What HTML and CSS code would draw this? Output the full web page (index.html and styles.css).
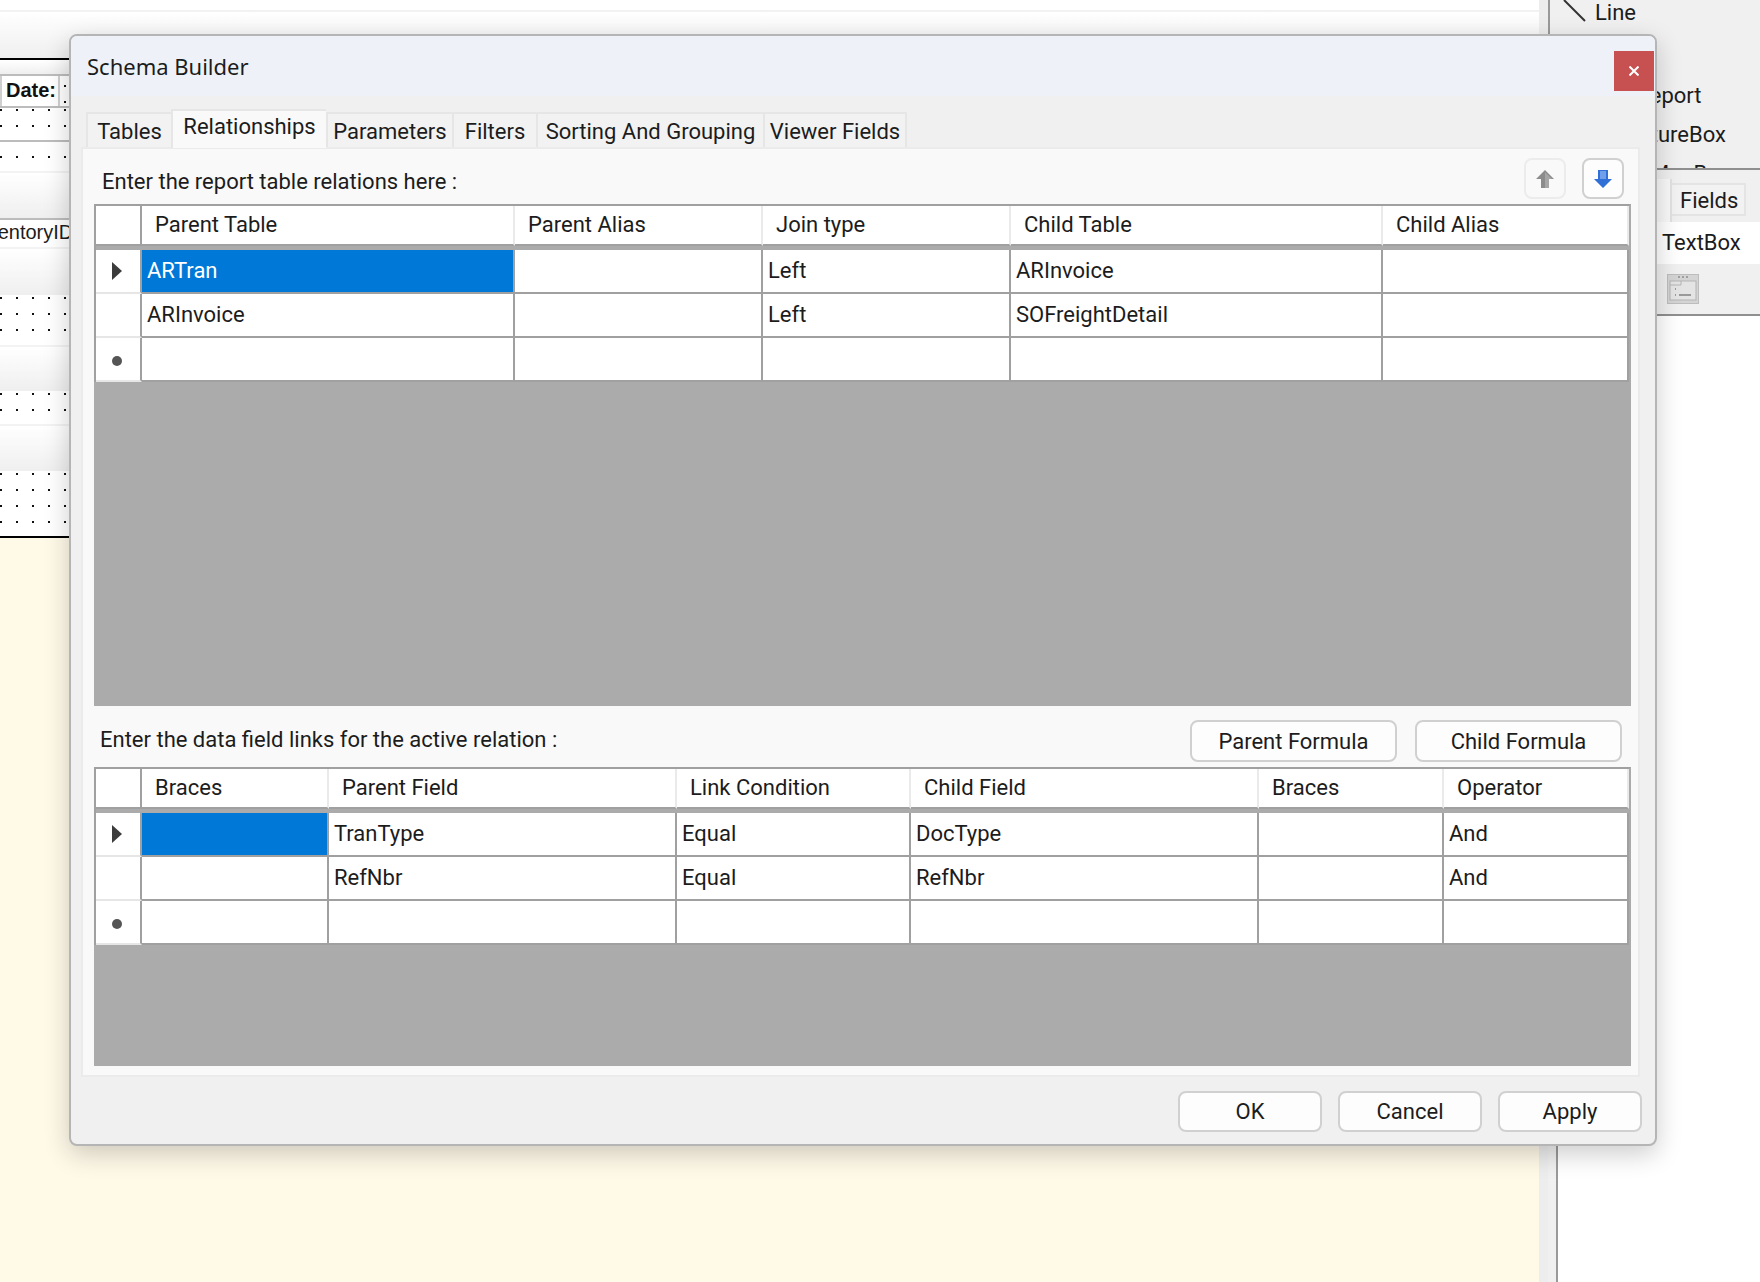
FILE: index.html
```html
<!DOCTYPE html>
<html lang="en">
<head>
    <meta charset="UTF-8">
    <title>Schema Builder</title>
    <link rel="stylesheet" href="styles.css">
</head>
<body>
    <!-- Report design surface -->
    <div class="designer">
        <div class="top-strip"></div>
        <div class="band band-head"></div>
        <div class="rule-black"></div>
        <div class="band band-sub"></div>
        <div class="date-row"><div class="date-box">Date:</div></div>
        <div class="dots dots-a"></div>
        <div class="dots dots-b"></div>
        <div class="band band-group"></div>
        <div class="field-row"><span class="field-name">InventoryID</span></div>
        <div class="band band-detail"></div>
        <div class="dots dots-c"></div>
        <div class="band band-foot"></div>
        <div class="dots dots-d"></div>
        <div class="band band-end"></div>
        <div class="dots dots-e"></div>
        <div class="rule-black"></div>
        <div class="paper"></div>
    </div>

    <div class="gutter"></div>

    <!-- Toolbox and fields on the right -->
    <div class="side">
        <div class="toolbox">
            <div class="tool tool-line">
                <svg class="line-icon" width="24" height="22" viewBox="0 0 24 22"><path d="M1 0 L22 21" stroke="#333" stroke-width="2"/></svg>
                <span>Line</span>
            </div>
            <div class="tool tool-report">Subreport</div>
            <div class="tool tool-picture">PictureBox</div>
            <div class="tool tool-map">MapBox</div>
        </div>
        <div class="props">
            <div class="props-tabs">
                <div class="props-tab-active"></div>
                <div class="props-tab">Fields</div>
            </div>
            <div class="props-row">TextBox</div>
            <div class="props-bar">
                <svg width="32" height="30" viewBox="0 0 32 30">
                    <rect x="0.5" y="0.5" width="31" height="29" fill="#d4d4d4" stroke="#bdbdbd"/>
                    <rect x="3" y="7" width="26" height="19" fill="#e4e4e4" stroke="#b4b4b4"/>
                    <path d="M3 11 H14 V7" fill="none" stroke="#b4b4b4"/>
                    <path d="M11 3 H13 M15 3 H17 M19 3 H21" stroke="#a0a0a0" stroke-width="2"/>
                    <path d="M8 15 H9 M8 21 H9 M12 21 H24" stroke="#9a9a9a" stroke-width="2"/>
                </svg>
            </div>
            <div class="props-body"></div>
        </div>
    </div>

    <!-- Dialog -->
    <div class="dialog">
        <div class="dialog-title">
            <span>Schema Builder</span>
            <button class="close-btn">
                <svg width="10" height="10" viewBox="0 0 10 10"><path d="M0.5 0.5 L9.5 9.5 M9.5 0.5 L0.5 9.5" stroke="#fff" stroke-width="2"/></svg>
            </button>
        </div>

        <div class="tabs">
            <div class="tab tab-tables">Tables</div>
            <div class="tab tab-active">Relationships</div>
            <div class="tab tab-params">Parameters</div>
            <div class="tab tab-filters">Filters</div>
            <div class="tab tab-sorting">Sorting And Grouping</div>
            <div class="tab tab-viewer">Viewer Fields</div>
        </div>

        <div class="panel">
            <div class="panel-head">
                <span class="panel-label">Enter the report table relations here :</span>
                <div class="arrow-btns">
                    <button class="arrow-btn arrow-off">
                        <svg width="18" height="18" viewBox="0 0 18 18"><path d="M9 0 L18 9 H13 V18 H5 V9 H0 Z" fill="#8c8c8c"/><path d="M9 2 L9 18 H13 V9 H16 Z" fill="#a6a6a6"/></svg>
                    </button>
                    <button class="arrow-btn">
                        <svg width="18" height="18" viewBox="0 0 18 18"><path d="M4 0 H14 V9 H18 L9 18 L0 9 H4 Z" fill="#2f6fd6"/><path d="M6 1 H12 V9 H6 Z" fill="#6f9eea"/></svg>
                    </button>
                </div>
            </div>

            <div class="grid-box grid-top">
                <div class="grid cols-relations">
                    <div class="head corner"></div>
                    <div class="head">Parent Table</div>
                    <div class="head">Parent Alias</div>
                    <div class="head">Join type</div>
                    <div class="head">Child Table</div>
                    <div class="head">Child Alias</div>

                    <div class="mark"><i class="mark-arrow"></i></div>
                    <div class="cell selected">ARTran</div>
                    <div class="cell"></div>
                    <div class="cell">Left</div>
                    <div class="cell">ARInvoice</div>
                    <div class="cell"></div>

                    <div class="mark"></div>
                    <div class="cell">ARInvoice</div>
                    <div class="cell"></div>
                    <div class="cell">Left</div>
                    <div class="cell">SOFreightDetail</div>
                    <div class="cell"></div>

                    <div class="mark"><i class="mark-dot"></i></div>
                    <div class="cell"></div>
                    <div class="cell"></div>
                    <div class="cell"></div>
                    <div class="cell"></div>
                    <div class="cell"></div>
                </div>
            </div>

            <div class="panel-mid">
                <span class="panel-label">Enter the data field links for the active relation :</span>
                <div class="formula-btns">
                    <button class="btn btn-formula">Parent Formula</button>
                    <button class="btn btn-formula">Child Formula</button>
                </div>
            </div>

            <div class="grid-box grid-bottom">
                <div class="grid cols-links">
                    <div class="head corner"></div>
                    <div class="head">Braces</div>
                    <div class="head">Parent Field</div>
                    <div class="head">Link Condition</div>
                    <div class="head">Child Field</div>
                    <div class="head">Braces</div>
                    <div class="head">Operator</div>

                    <div class="mark"><i class="mark-arrow"></i></div>
                    <div class="cell selected"></div>
                    <div class="cell">TranType</div>
                    <div class="cell">Equal</div>
                    <div class="cell">DocType</div>
                    <div class="cell"></div>
                    <div class="cell">And</div>

                    <div class="mark"></div>
                    <div class="cell"></div>
                    <div class="cell">RefNbr</div>
                    <div class="cell">Equal</div>
                    <div class="cell">RefNbr</div>
                    <div class="cell"></div>
                    <div class="cell">And</div>

                    <div class="mark"><i class="mark-dot"></i></div>
                    <div class="cell"></div>
                    <div class="cell"></div>
                    <div class="cell"></div>
                    <div class="cell"></div>
                    <div class="cell"></div>
                    <div class="cell"></div>
                </div>
            </div>
        </div>

        <div class="dialog-foot">
            <button class="btn btn-foot">OK</button>
            <button class="btn btn-foot">Cancel</button>
            <button class="btn btn-foot">Apply</button>
        </div>
    </div>
</body>
</html>
```

FILE: styles.css
```css
/* Base */
body {
    margin: 0;
    width: 1760px;
    height: 1282px;
    overflow: hidden;
    display: flex;
    background-color: #fff;
    color: #1c1c1c;
    font-family: Roboto, "Liberation Sans", sans-serif;
    font-size: 22px;
}

button {
    font: inherit;
    color: inherit;
    padding: 0;
    cursor: pointer;
}

/* Design surface */
.designer {
    width: 1539px;
    height: 1282px;
    flex-shrink: 0;
    display: flex;
    flex-direction: column;
    font-family: "Liberation Sans", sans-serif;
    font-size: 20px;
    overflow: hidden;
}

.top-strip {
    height: 10px;
    background-color: #fff;
    border-bottom: 2px solid #f2f2f2;
}

.band {
    background: linear-gradient(#fff, #efefef);
    border-top: 2px solid #f3f3f3;
    box-sizing: border-box;
}

.band-head { height: 46px; border-top: none; }
.band-sub { height: 14px; border-top: none; }
.band-group { height: 47px; }
.band-detail { height: 48px; }
.band-foot { height: 46px; }
.band-end { height: 47px; }

.rule-black {
    height: 2px;
    background-color: #000;
}

.date-row {
    height: 30px;
    border-top: 2px solid #bcbcbc;
    border-bottom: 2px solid #bcbcbc;
    background-color: #fff;
    background-image: conic-gradient(at 2px 2px, transparent 75%, #111 0);
    background-size: 16px 16px;
    background-position: 0 9px;
}

.date-box {
    width: 60px;
    height: 30px;
    box-sizing: border-box;
    padding-left: 4px;
    border-left: 2px solid #cfcfcf;
    border-right: 2px solid #cfcfcf;
    background-color: #fff;
    font-weight: bold;
    line-height: 28px;
    color: #111;
}

.dots {
    background-color: #fff;
    background-image: conic-gradient(at 2px 2px, transparent 75%, #111 0);
    background-size: 16px 16px;
}

.dots-a { height: 32px; background-position: 0 1px; border-bottom: 2px solid #bcbcbc; }
.dots-b { height: 29px; background-position: 0 14px; }
.dots-c { height: 50px; background-position: 0 2px; }
.dots-d { height: 33px; background-position: 0 2px; }
.dots-e { height: 65px; background-position: 0 2px; }

.field-row {
    height: 27px;
    border-top: 2px solid #bcbcbc;
    background-color: #fff;
    line-height: 24px;
    overflow: hidden;
    white-space: nowrap;
}

.field-name {
    display: inline-block;
    margin-left: -29px;
}

.paper {
    flex-grow: 1;
    background-color: #fffae8;
}

.gutter {
    width: 9px;
    flex-shrink: 0;
    background-color: #ededed;
}

/* Right side */
.side {
    flex-grow: 1;
    display: flex;
    flex-direction: column;
    min-width: 0;
}

.toolbox {
    height: 168px;
    background-color: #f0f0f0;
    border-left: 2px solid #999;
    overflow: hidden;
    flex-shrink: 0;
    font-size: 22px;
    line-height: 28px;
}

.tool { white-space: nowrap; }

.tool-line {
    height: 82px;
    padding-left: 13px;
    display: flex;
    align-items: flex-start;
    gap: 8px;
}

.line-icon { margin-top: 0; flex-shrink: 0; }
.tool-line span { margin-top: -1px; }

.tool-report { height: 39px; padding-left: 55px; }
.tool-picture { height: 39px; padding-left: 70px; }
.tool-map { padding-left: 100px; }

.props {
    flex-grow: 1;
    display: flex;
    flex-direction: column;
    border-top: 2px solid #8f8f8f;
    background-color: #f0f0f0;
}

.props-tabs {
    height: 52px;
    display: flex;
    align-items: flex-start;
}

.props-tab-active {
    width: 122px;
    height: 43px;
    margin-top: 9px;
    background-color: #f9f9f9;
    border-right: 2px solid #e2e2e2;
    flex-shrink: 0;
}

.props-tab {
    width: 74px;
    height: 33px;
    margin-top: 13px;
    padding-left: 8px;
    box-sizing: border-box;
    border: 2px solid #e4e4e4;
    border-left: none;
    background-color: #f2f2f2;
    line-height: 32px;
}

.props-row {
    height: 42px;
    padding-left: 114px;
    line-height: 42px;
    background-color: #fff;
}

.props-bar {
    height: 52px;
    padding: 10px 0 0 119px;
    box-sizing: border-box;
    border-bottom: 2px solid #8f8f8f;
    background-color: #f0f0f0;
}

.props-body {
    flex-grow: 1;
    margin-left: 8px;
    background-color: #fff;
    border-left: 2px solid #999;
}

/* Dialog */
.dialog {
    position: absolute;
    left: 69px;
    top: 34px;
    width: 1588px;
    height: 1112px;
    box-sizing: border-box;
    display: flex;
    flex-direction: column;
    background-color: #f0f0f0;
    border: 2px solid #b5b5b5;
    border-radius: 8px;
    box-shadow: 0 8px 26px rgba(0, 0, 0, 0.2);
}

.dialog-title {
    height: 60px;
    flex-shrink: 0;
    position: relative;
    padding-left: 16px;
    box-sizing: border-box;
    background-color: #eef2f8;
    border-radius: 6px 6px 0 0;
    font-family: "Noto Sans", sans-serif;
    font-size: 22px;
    line-height: 60px;
}

.close-btn {
    position: absolute;
    right: 1px;
    top: 15px;
    width: 40px;
    height: 40px;
    border: none;
    background-color: #c75050;
    display: flex;
    align-items: center;
    justify-content: center;
}

/* Tabs */
.tabs {
    height: 51px;
    flex-shrink: 0;
    display: flex;
    align-items: flex-end;
    padding-left: 15px;
}

.tab {
    height: 35px;
    box-sizing: border-box;
    border: 2px solid #e6e6e6;
    border-bottom: none;
    border-right: none;
    background-color: #f2f2f2;
    text-align: center;
    line-height: 35px;
    white-space: nowrap;
}

.tab-tables { width: 85px; }
.tab-active {
    width: 155px;
    height: 39px;
    background-color: #f9f9f9;
    line-height: 31px;
    position: relative;
    top: 1px;
}
.tab-params { width: 126px; }
.tab-filters { width: 84px; }
.tab-sorting { width: 227px; }
.tab-viewer { width: 144px; border-right: 2px solid #e6e6e6; }

.panel {
    height: 930px;
    margin: 0 15px 0 10px;
    flex-shrink: 0;
    box-sizing: border-box;
    padding: 0 7px 9px 11px;
    display: flex;
    flex-direction: column;
    background-color: #f9f9f9;
    border: 2px solid #ebebeb;
}

.panel-head {
    height: 55px;
    flex-shrink: 0;
    display: flex;
    justify-content: space-between;
    padding-left: 8px;
    padding-right: 7px;
}

.panel-label {
    line-height: 1;
    white-space: nowrap;
}

.panel-head .panel-label { margin-top: 22px; }
.panel-mid .panel-label { margin-top: 23px; }

.arrow-btns {
    display: flex;
    gap: 16px;
    padding-top: 9px;
}

.arrow-btn {
    width: 42px;
    height: 41px;
    display: flex;
    align-items: center;
    justify-content: center;
    border: 2px solid #d0d0d0;
    border-radius: 8px;
    background-color: #fdfdfd;
}

.arrow-off {
    border-color: #ececec;
    background-color: #f9f9f9;
}

.panel-mid {
    height: 61px;
    flex-shrink: 0;
    display: flex;
    justify-content: space-between;
    padding: 0 9px 0 6px;
}

.formula-btns {
    display: flex;
    gap: 18px;
    padding-top: 14px;
}

.btn {
    box-sizing: border-box;
    border: 2px solid #d0d0d0;
    border-radius: 8px;
    background-color: #fdfdfd;
}

.btn-formula {
    width: 207px;
    height: 42px;
}

/* Grids */
.grid-box {
    flex-shrink: 0;
    background-color: #ababab;
    overflow: hidden;
}

.grid-top { height: 502px; }
.grid-bottom { height: 299px; }

.grid {
    display: grid;
    grid-auto-rows: 44px;
    border-top: 2px solid #a0a0a0;
    border-left: 2px solid #a0a0a0;
    border-right: 2px solid #ababab;
}

.cols-relations {
    grid-template-columns: 46px 373px 248px 248px 372px 1fr;
}

.cols-links {
    grid-template-columns: 46px 187px 348px 234px 348px 185px 1fr;
}

.head {
    height: 40px;
    box-sizing: border-box;
    padding-left: 13px;
    background-color: #fff;
    border-right: 2px solid #eaeaea;
    border-bottom: 2px solid #a0a0a0;
    line-height: 37px;
    white-space: nowrap;
}

.head.corner {
    border-right-color: #a0a0a0;
    padding: 0;
}

.grid .head:nth-child(-n+7) { grid-row: 1; }

.mark {
    background-color: #fff;
    border-right: 2px solid #a0a0a0;
    border-bottom: 2px solid #e6e6e6;
    display: flex;
    align-items: center;
    justify-content: center;
    box-sizing: border-box;
}

.mark-arrow {
    display: block;
    width: 0;
    height: 0;
    margin-right: 2px;
    border-left: 10px solid #3c3c3c;
    border-top: 9px solid transparent;
    border-bottom: 9px solid transparent;
}

.mark-dot {
    display: block;
    width: 10px;
    height: 10px;
    margin: 3px 3px 0 0;
    border-radius: 50%;
    background-color: #555;
}

.cell {
    box-sizing: border-box;
    padding-left: 5px;
    background-color: #fff;
    border-right: 2px solid #a0a0a0;
    border-bottom: 2px solid #a0a0a0;
    line-height: 41px;
    white-space: nowrap;
}

.cell:last-child,
.cell.selected { border-right-color: #a0a0a0; }

.selected {
    background-color: #0078d7;
    color: #fff;
}

/* Footer */
.dialog-foot {
    flex-grow: 1;
    display: flex;
    justify-content: flex-end;
    gap: 16px;
    padding: 14px 13px 0 0;
}

.btn-foot {
    width: 144px;
    height: 41px;
}
```
